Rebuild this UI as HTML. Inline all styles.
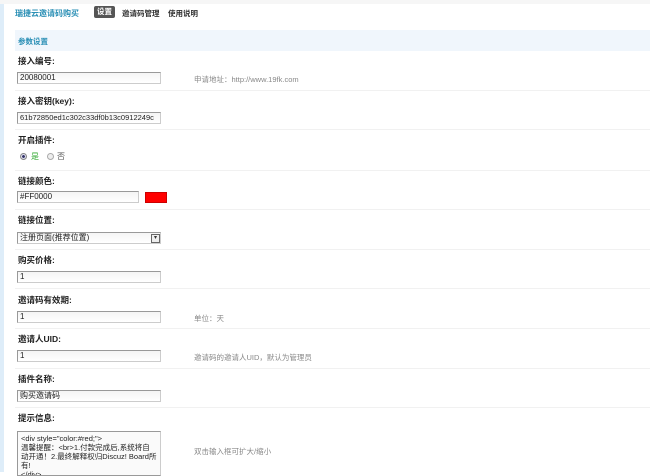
<!DOCTYPE html>
<html><head><meta charset="utf-8"><style>
*{margin:0;padding:0;box-sizing:border-box}
body{width:650px;height:472px;overflow:hidden;background:#fff;position:relative;font-family:"Liberation Sans","Noto Sans CJK SC",sans-serif;font-size:9px;color:#333}
.a{position:absolute;white-space:nowrap}
.strip{left:0;top:0;width:4px;height:472px;background:#deedf9}
.lbl{left:18px;font-weight:bold;color:#222;font-size:8.5px}
.in{left:17px;width:144px;height:12px;border:1px solid #999;border-right-color:#ccc;border-bottom-color:#ccc;background:linear-gradient(#f4f4f4,#fff);font-size:8px;line-height:10px;padding-left:2px;color:#222;overflow:hidden}
.sep{left:15px;width:635px;height:1px;background:#f1f1f1}
.hint{left:194px;color:#888;font-size:7.5px}
</style></head><body>
<div class="a strip"></div>
<div class="a" style="left:0;top:0;width:650px;height:4px;background:#f6f6f6"></div>
<div class="a" style="left:15px;top:8px;color:#2a8fb5;font-weight:bold;font-size:8px">瑞捷云邀请码购买</div>
<div class="a" style="left:94px;top:6px;width:21px;height:12px;background:#555;border-radius:2px;color:#fff;font-size:7.5px;font-weight:bold;text-align:center;line-height:12px">设置</div>
<div class="a" style="left:122px;top:8px;font-size:7.5px;font-weight:bold;color:#333">邀请码管理</div>
<div class="a" style="left:168px;top:8px;font-size:7.5px;font-weight:bold;color:#333">使用说明</div>
<div class="a" style="left:15px;top:30px;width:635px;height:21px;background:#f0f6fc"></div>
<div class="a" style="left:18px;top:36px;color:#2a8fb5;font-weight:bold;font-size:7.5px">参数设置</div>

<div class="a lbl" style="top:55px">接入编号:</div>
<div class="a in" style="top:72px">20080001</div>
<div class="a hint" style="top:74px">申请地址：http://www.19fk.com</div>
<div class="a sep" style="top:90px"></div>

<div class="a lbl" style="top:95px">接入密钥(key):</div>
<div class="a in" style="top:112px;font-size:7.5px">61b72850ed1c302c33df0b13c0912249c</div>
<div class="a sep" style="top:129px"></div>

<div class="a lbl" style="top:134px">开启插件:</div>
<div class="a" style="left:20px;top:153px;width:7px;height:7px;border-radius:50%;border:1px solid #888;background:radial-gradient(#336 35%,#dde 45%)"></div>
<div class="a" style="left:31px;top:151px;color:#3a3;font-size:8px">是</div>
<div class="a" style="left:47px;top:153px;width:7px;height:7px;border-radius:50%;border:1px solid #aaa;background:#eee"></div>
<div class="a" style="left:57px;top:151px;color:#555;font-size:8px">否</div>
<div class="a sep" style="top:170px"></div>

<div class="a lbl" style="top:175px">链接颜色:</div>
<div class="a in" style="top:191px;width:122px">#FF0000</div>
<div class="a" style="left:145px;top:192px;width:22px;height:11px;background:#f00;border:1px solid #c00"></div>
<div class="a sep" style="top:209px"></div>

<div class="a lbl" style="top:214px">链接位置:</div>
<div class="a in" style="top:232px">注册页面(推荐位置)</div>
<div class="a" style="left:151px;top:234px;width:9px;height:9px;border:1px solid #666;background:#eee;font-size:6px;line-height:7px;text-align:center">▾</div>
<div class="a sep" style="top:249px"></div>

<div class="a lbl" style="top:254px">购买价格:</div>
<div class="a in" style="top:271px">1</div>
<div class="a sep" style="top:288px"></div>

<div class="a lbl" style="top:294px">邀请码有效期:</div>
<div class="a in" style="top:311px">1</div>
<div class="a hint" style="top:313px">单位：天</div>
<div class="a sep" style="top:328px"></div>

<div class="a lbl" style="top:333px">邀请人UID:</div>
<div class="a in" style="top:350px">1</div>
<div class="a hint" style="top:352px">邀请码的邀请人UID，默认为管理员</div>
<div class="a sep" style="top:368px"></div>

<div class="a lbl" style="top:373px">插件名称:</div>
<div class="a in" style="top:390px">购买邀请码</div>
<div class="a sep" style="top:407px"></div>

<div class="a lbl" style="top:412px">提示信息:</div>
<div class="a" style="left:17px;top:431px;width:144px;height:45px;border:1px solid #999;border-right-color:#ccc;background:#fafafa;font-size:7.5px;line-height:9px;padding:2px 3px;white-space:normal;color:#222;overflow:hidden">&lt;div style="color:#red;"&gt;<br>温馨提醒：&lt;br&gt;1.付款完成后,系统将自动开通！2.最终解释权归Discuz! Board所有!<br>&lt;/div&gt;</div>
<div class="a hint" style="top:446px">双击输入框可扩大/缩小</div>
</body></html>
